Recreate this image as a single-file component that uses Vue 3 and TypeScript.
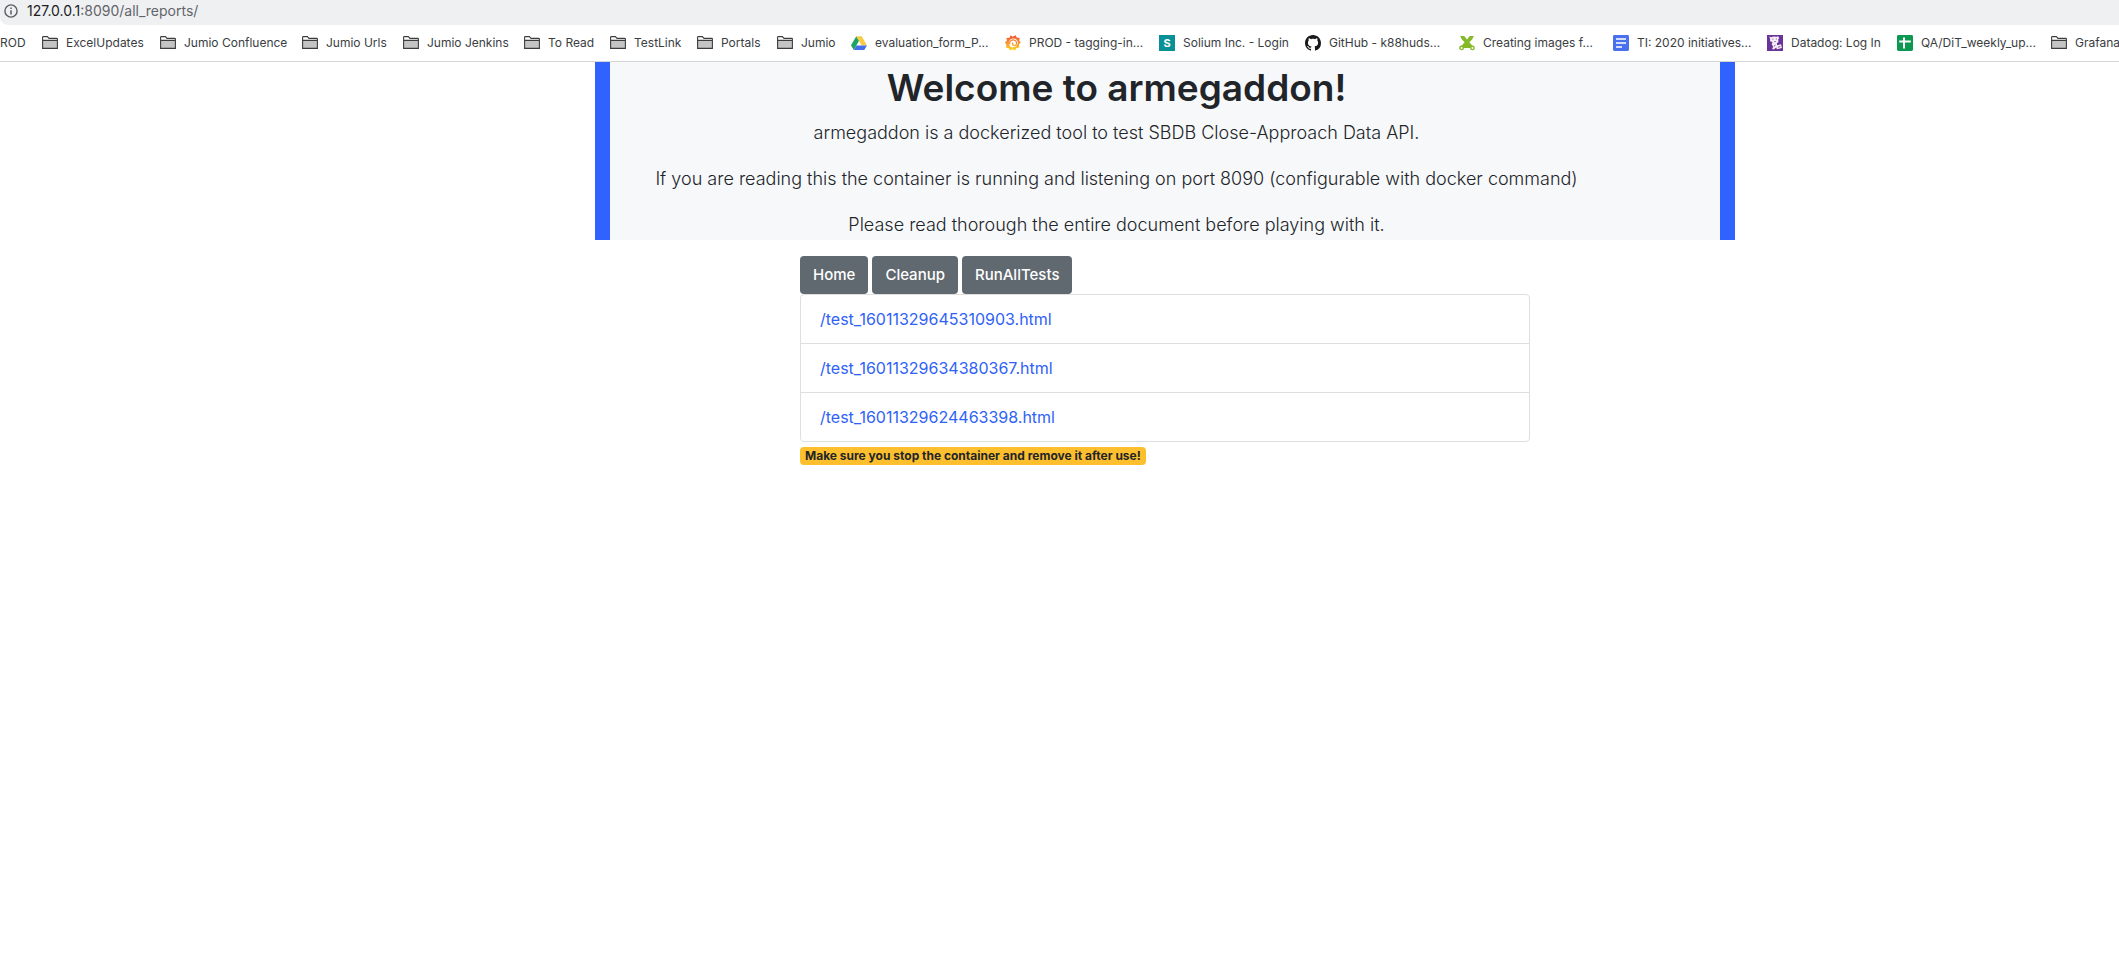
<script setup lang="ts">
interface Bookmark {
  label: string
  icon: string
}

const bookmarks: Bookmark[] = [
  { label: 'ROD', icon: '' },
  { label: 'ExcelUpdates', icon: 'folder' },
  { label: 'Jumio Confluence', icon: 'folder' },
  { label: 'Jumio Urls', icon: 'folder' },
  { label: 'Jumio Jenkins', icon: 'folder' },
  { label: 'To Read', icon: 'folder' },
  { label: 'TestLink', icon: 'folder' },
  { label: 'Portals', icon: 'folder' },
  { label: 'Jumio', icon: 'folder' },
  { label: 'evaluation_form_P...', icon: 'drive' },
  { label: 'PROD - tagging-in...', icon: 'grafana' },
  { label: 'Solium Inc. - Login', icon: 'solium' },
  { label: 'GitHub - k88huds...', icon: 'github' },
  { label: 'Creating images f...', icon: 'cross' },
  { label: 'TI: 2020 initiatives...', icon: 'doc' },
  { label: 'Datadog: Log In', icon: 'datadog' },
  { label: 'QA/DiT_weekly_up...', icon: 'sheet' },
  { label: 'Grafana', icon: 'folder' },
]

const actions: string[] = ['Home', 'Cleanup', 'RunAllTests']

const reports: string[] = [
  '/test_16011329645310903.html',
  '/test_16011329634380367.html',
  '/test_16011329624463398.html',
]
</script>

<template>
  <div class="page">
    <header>
      <div class="address">
        <svg class="info" viewBox="0 0 14 14" aria-hidden="true">
          <circle cx="7" cy="7" r="6.1" fill="none" stroke="#5a5d61" stroke-width="1.4" />
          <path d="M7 6.2v4.2M7 3.5v1.5" stroke="#5a5d61" stroke-width="1.5" />
        </svg>
        <span class="url"><span class="host">127.0.0.1</span>:8090/all_reports/</span>
      </div>
      <nav class="bookmarks">
        <a v-for="b in bookmarks" :key="b.label" class="bookmark" href="#">
          <svg v-if="b.icon" class="icon" viewBox="0 0 16 16" aria-hidden="true">
            <g v-if="b.icon === 'folder'">
              <path d="M.6 13.4V2.4q0-.8.8-.8h4l1.6 1.8h7.6q.8 0 .8.8v9.2z" fill="#fff" />
              <path d="M1 5.6h14v7.6H1z" fill="#c4c4c4" />
              <path d="M.6 13.4V2.2q0-.6.7-.6h4.1L7 3.4h7.7q.7 0 .7.7v9.3zM.6 5.4h14.8" fill="none" stroke="#3c3d3f" stroke-width="1.1" />
            </g>
            <g v-else-if="b.icon === 'drive'">
              <path d="M5.3 1.2 8 5.8 2.8 15 0 10.3z" fill="#1da362" />
              <path d="M5.3 1.2h5.4l5.3 9.2h-5.3z" fill="#fbca43" />
              <path d="M5.4 10.4H16L13.3 15H2.8z" fill="#4570ea" />
            </g>
            <g v-else-if="b.icon === 'grafana'">
              <defs>
                <linearGradient id="grafana-fill" gradientUnits="userSpaceOnUse" x1="0" y1="0" x2="0" y2="16">
                  <stop offset="0" stop-color="#ee4f30" />
                  <stop offset=".5" stop-color="#f79232" />
                  <stop offset="1" stop-color="#fce52a" />
                </linearGradient>
              </defs>
              <path d="M5.6.3 7.7 1.7 10.6.3l1.2 2.2 2.9.4-.4 2.7 1.4 2.2-1.8 1.8.4 3.2-2.8.3-1.4 2.5-2.5-1.1-2.7 1.1-1.2-2.4-2.8-.6.5-2.8L0 7.5l2-1.9-.6-2.7 3.1-.2z" fill="url(#grafana-fill)" />
              <circle cx="8.4" cy="8" r="4.6" fill="#fff" />
              <path d="M13 9.2A5 5 0 0 1 8.2 12.8M4.8 9.4C3.6 5.4 8.6 3.4 10.9 6.2c1.7 2.2.2 4.6-1.8 4.5-1.9-.1-2.3-2.3-.8-2.9" fill="none" stroke="url(#grafana-fill)" stroke-width="1.3" />
            </g>
            <g v-else-if="b.icon === 'solium'">
              <path d="M0 0h16v16H0z" fill="#079096" />
              <text x="8" y="12" text-anchor="middle" font-family="Inter, sans-serif" font-size="11" font-weight="700" fill="#fff">S</text>
            </g>
            <path v-else-if="b.icon === 'github'" fill="#17191c" d="M8 0C3.58 0 0 3.58 0 8c0 3.54 2.29 6.53 5.47 7.59.4.07.55-.17.55-.38 0-.19-.01-.82-.01-1.49-2.01.37-2.53-.49-2.69-.94-.09-.23-.48-.94-.82-1.13-.28-.15-.68-.52-.01-.53.63-.01 1.08.58 1.23.82.72 1.21 1.87.87 2.33.66.07-.52.28-.87.51-1.07-1.78-.2-3.64-.89-3.64-3.95 0-.87.31-1.59.82-2.15-.08-.2-.36-1.02.08-2.12 0 0 .67-.21 2.2.82.64-.18 1.32-.27 2-.27s1.36.09 2 .27c1.53-1.04 2.2-.82 2.2-.82.44 1.1.16 1.92.08 2.12.51.56.82 1.27.82 2.15 0 3.07-1.87 3.75-3.65 3.95.29.25.54.73.54 1.48 0 1.07-.01 1.93-.01 2.2 0 .21.15.46.55.38A8.01 8.01 0 0 0 16 8c0-4.42-3.58-8-8-8z" />
            <g v-else-if="b.icon === 'cross'">
              <path d="M1.2 1h4L8 4.6 10.8 1h4q-.6 3.2-4.4 6.2l3.4 4-2 1.8H4.2l-2-1.8 3.4-4Q1.8 4.2 1.2 1z" fill="#85b928" />
              <circle cx="2.6" cy="12.9" r="1.7" fill="#fff" stroke="#85b928" stroke-width="1.4" />
              <circle cx="13.4" cy="12.9" r="1.7" fill="#fff" stroke="#85b928" stroke-width="1.4" />
            </g>
            <g v-else-if="b.icon === 'doc'">
              <rect width="16" height="16" rx="1.4" fill="#4a70ee" />
              <path d="M3 4h10M3 8h10M3 12h6" stroke="#fff" stroke-width="1.7" />
            </g>
            <g v-else-if="b.icon === 'datadog'">
              <path d="M0 0h16v16H0z" fill="#693496" />
              <path d="M2.2 1.6 4.2 2.2l2-.8 3.2.4 1.8-.6 1 1.8-1 1.6.3 2.2-1.7 1.8.5 1.7 3.8-1 .8 3.6-5 1.4-.6-1.8-2.6 2-1.6-.5 1.1-2.2-1.5-2.5.8-2.3L3 6.2 3.2 4z" fill="#f3ecf7" />
              <path d="M5.4 4.2h.9M8.9 4h.9M7.2 6.6h1.6M8.2 9.8l-.9 1.6M11 12.2l2.4-.6" fill="none" stroke="#693496" stroke-width=".8" />
            </g>
            <g v-else-if="b.icon === 'sheet'">
              <rect width="16" height="16" rx="1.4" fill="#0c9850" />
              <path d="M2.2 6.4h11.6M7 2.6v11" stroke="#fff" stroke-width="2" />
            </g>
          </svg>
          <span>{{ b.label }}</span>
        </a>
      </nav>
    </header>

    <main>
      <section class="hero">
        <h1>Welcome to armegaddon!</h1>
        <p>armegaddon is a dockerized tool to test SBDB Close-Approach Data API.</p>
        <p>If you are reading this the container is running and listening on port 8090 (configurable with docker command)</p>
        <p>Please read thorough the entire document before playing with it.</p>
      </section>

      <section class="content">
        <div class="actions">
          <button v-for="a in actions" :key="a" type="button">{{ a }}</button>
        </div>
        <ul class="reports">
          <li v-for="r in reports" :key="r"><a :href="r">{{ r }}</a></li>
        </ul>
        <strong class="badge">Make sure you stop the container and remove it after use!</strong>
      </section>
    </main>
  </div>
</template>

<style>
body {
  margin: 0;
  background: #fff;
}
</style>

<style scoped>
* {
  box-sizing: border-box;
}

.page {
  overflow-x: hidden;
  font-family: Inter, "Liberation Sans", sans-serif;
  font-size: 16px;
  line-height: 24px;
  color: #212529;
}

.address {
  display: flex;
  align-items: center;
  gap: 9px;
  height: 25px;
  padding: 0 0 3px 4px;
  background: #eff0f2;
  border-bottom-left-radius: 8px;
  font-size: 14px;
  color: #626569;
}

.info {
  width: 14px;
  height: 14px;
}

.host {
  color: #202124;
}

.bookmarks {
  display: grid;
  grid-template-columns:
    42px 118px 142px 101px 121px 86px 87px 80px 74px
    154px 154px 146px 154px 154px 154px 130px 154px 68px;
  height: 37px;
  border-bottom: 1px solid #d5d6d8;
}

.bookmark {
  display: flex;
  align-items: center;
  gap: 8px;
  font-size: 12px;
  color: #3a3d41;
  text-decoration: none;
  white-space: nowrap;
}

.icon {
  flex: none;
  width: 16px;
  height: 16px;
}

main {
  padding-left: 211px;
}

.hero {
  max-width: 1140px;
  margin: 0 auto;
  padding-right: 97px;
  background: #f7f8fa;
  border: solid #2f62ff;
  border-width: 0 15px;
  text-align: center;
}

h1 {
  margin: 0;
  padding: 2px 0 6px;
  font-size: 37px;
  line-height: 48px;
  font-weight: 600;
}

p {
  margin: 0 0 16px;
  font-size: 18px;
  line-height: 30px;
  font-weight: 300;
}

p:last-child {
  margin-bottom: 0;
}

.content {
  max-width: 730px;
  margin: 16px auto 0;
}

.actions {
  display: flex;
  gap: 4px;
}

button {
  height: 38px;
  padding: 0 13px;
  border: 0;
  border-radius: 4px;
  background: #606870;
  color: #fff;
  font: inherit;
  font-size: 15px;
  font-weight: 500;
}

.reports {
  margin: 0;
  padding: 0;
  list-style: none;
  border: 1px solid #dedfe0;
  border-radius: 4px;
}

li {
  padding: 12px 19px;
}

li + li {
  border-top: 1px solid #dedfe0;
}

li a {
  color: #2f62f7;
  text-decoration: none;
}

.badge {
  display: inline-block;
  margin-top: 5px;
  padding: 0 5px;
  border-radius: 4px;
  background: #fdbf2d;
  font-size: 12px;
  line-height: 18px;
  font-weight: 700;
}
</style>
